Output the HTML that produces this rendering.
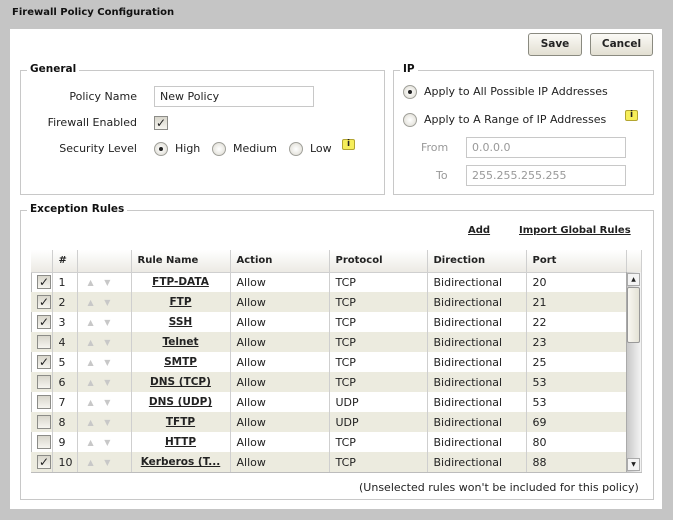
<!DOCTYPE html><html><head><style>
*{margin:0;padding:0;box-sizing:border-box}
body{width:673px;height:520px;background:#c5c5c5;font-family:"DejaVu Sans","Liberation Sans",sans-serif;font-size:11px;color:#222;position:relative;overflow:hidden}
.a{position:absolute}
.r{position:absolute;right:536px;text-align:right}
.title{left:12px;top:7px;font-weight:bold;font-size:10px;color:#111}
.panel{left:10px;top:29px;width:652px;height:480px;background:#fff}
.fs{border:1px solid #c8c8c8}
.lg{background:#fff;font-weight:bold;padding:0 3px;font-size:10.5px;color:#111}
.btn{border:1px solid #8a8a80;border-radius:3px;background:linear-gradient(#fbfaf6,#e2dfd2);font-weight:bold;font-size:10.5px;text-align:center;line-height:21px;height:23px}
.inp{border:1px solid #c8c8c8;height:21px;line-height:19px;padding-left:5px}
.cb{width:14px;height:14px;border:1px solid #8c8c88;background:linear-gradient(#d8d6cc,#f6f5f0);font-size:12px;line-height:12px;text-align:center;font-weight:bold}
.rd{width:14px;height:14px;border:1px solid #a0a09a;border-radius:50%;background:radial-gradient(#fff,#dcdad0)}
.rd.on::after{content:"";position:absolute;left:4px;top:4px;width:4px;height:4px;border-radius:50%;background:#222}
.info{width:13px;height:11px;background:#f6ee5a;border:1px solid #b3a530;font-size:9px;line-height:9px;text-align:center;font-weight:bold;border-radius:2px}
table{border-collapse:collapse;position:absolute;left:31px;top:250px;width:610px;table-layout:fixed}
td,th{border-right:1px solid #cfcfcf;height:20px;padding-left:6px;text-align:left;font-size:11px;white-space:nowrap;overflow:hidden}
th{height:22px;background:linear-gradient(#fff,#eceae4);font-weight:bold;font-size:10px;border-bottom:1px solid #cfcfcf}
tr:nth-child(odd) td{background:#ecebdf}
.rn{text-align:center;font-weight:bold;font-size:10.5px;text-decoration:underline;padding:0}
.ar{color:#c8c8c8;font-size:8px;padding-left:10px;word-spacing:8px}
</style></head><body>
<div class="a title">Firewall Policy Configuration</div>
<div class="a panel"></div>
<div class="a btn" style="left:528px;top:33px;width:54px">Save</div>
<div class="a btn" style="left:590px;top:33px;width:63px">Cancel</div>

<div class="a fs" style="left:20px;top:70px;width:365px;height:125px"></div>
<div class="a lg" style="left:27px;top:63px">General</div>
<div class="r" style="top:90px">Policy Name</div>
<div class="a inp" style="left:154px;top:86px;width:160px">New Policy</div>
<div class="r" style="top:116px">Firewall Enabled</div>
<div class="a cb" style="left:154px;top:116px">✓</div>
<div class="r" style="top:142px">Security Level</div>
<div class="a rd on" style="left:154px;top:142px"></div><div class="a" style="left:175px;top:142px">High</div>
<div class="a rd" style="left:212px;top:142px"></div><div class="a" style="left:233px;top:142px">Medium</div>
<div class="a rd" style="left:289px;top:142px"></div><div class="a" style="left:310px;top:142px">Low</div>
<div class="a info" style="left:342px;top:139px">i</div>

<div class="a fs" style="left:393px;top:70px;width:261px;height:125px"></div>
<div class="a lg" style="left:400px;top:63px">IP</div>
<div class="a rd on" style="left:403px;top:85px"></div><div class="a" style="left:424px;top:85px">Apply to All Possible IP Addresses</div>
<div class="a rd" style="left:403px;top:113px"></div><div class="a" style="left:424px;top:113px">Apply to A Range of IP Addresses</div>
<div class="a info" style="left:625px;top:110px">i</div>
<div class="a" style="left:421px;top:141px;color:#999">From</div>
<div class="a inp" style="left:466px;top:137px;width:160px;color:#999">0.0.0.0</div>
<div class="a" style="left:436px;top:169px;color:#999">To</div>
<div class="a inp" style="left:466px;top:165px;width:160px;color:#999">255.255.255.255</div>

<div class="a fs" style="left:20px;top:210px;width:634px;height:290px"></div>
<div class="a lg" style="left:27px;top:203px">Exception Rules</div>
<div class="a" style="left:468px;top:225px;font-weight:bold;font-size:10px;text-decoration:underline">Add</div>
<div class="a" style="left:519px;top:225px;font-weight:bold;font-size:10px;text-decoration:underline">Import Global Rules</div>
<div class="a" style="left:31px;top:250px;width:611px;height:223px;border:1px solid #bcbcbc"></div>
<table>
<colgroup><col style="width:21px"><col style="width:25px"><col style="width:54px"><col style="width:99px"><col style="width:99px"><col style="width:98px"><col style="width:99px"><col style="width:100px"><col style="width:15px"></colgroup>
<tr style="background:none"><th></th><th>#</th><th></th><th>Rule Name</th><th>Action</th><th>Protocol</th><th>Direction</th><th>Port</th><th></th></tr>
<tr><td><div class="cb">✓</div></td><td>1</td><td class="ar">▲ ▼</td><td class="rn">FTP-DATA</td><td>Allow</td><td>TCP</td><td>Bidirectional</td><td>20</td><td></td></tr>
<tr><td><div class="cb">✓</div></td><td>2</td><td class="ar">▲ ▼</td><td class="rn">FTP</td><td>Allow</td><td>TCP</td><td>Bidirectional</td><td>21</td><td></td></tr>
<tr><td><div class="cb">✓</div></td><td>3</td><td class="ar">▲ ▼</td><td class="rn">SSH</td><td>Allow</td><td>TCP</td><td>Bidirectional</td><td>22</td><td></td></tr>
<tr><td><div class="cb"></div></td><td>4</td><td class="ar">▲ ▼</td><td class="rn">Telnet</td><td>Allow</td><td>TCP</td><td>Bidirectional</td><td>23</td><td></td></tr>
<tr><td><div class="cb">✓</div></td><td>5</td><td class="ar">▲ ▼</td><td class="rn">SMTP</td><td>Allow</td><td>TCP</td><td>Bidirectional</td><td>25</td><td></td></tr>
<tr><td><div class="cb"></div></td><td>6</td><td class="ar">▲ ▼</td><td class="rn">DNS (TCP)</td><td>Allow</td><td>TCP</td><td>Bidirectional</td><td>53</td><td></td></tr>
<tr><td><div class="cb"></div></td><td>7</td><td class="ar">▲ ▼</td><td class="rn">DNS (UDP)</td><td>Allow</td><td>UDP</td><td>Bidirectional</td><td>53</td><td></td></tr>
<tr><td><div class="cb"></div></td><td>8</td><td class="ar">▲ ▼</td><td class="rn">TFTP</td><td>Allow</td><td>UDP</td><td>Bidirectional</td><td>69</td><td></td></tr>
<tr><td><div class="cb"></div></td><td>9</td><td class="ar">▲ ▼</td><td class="rn">HTTP</td><td>Allow</td><td>TCP</td><td>Bidirectional</td><td>80</td><td></td></tr>
<tr><td><div class="cb">✓</div></td><td>10</td><td class="ar">▲ ▼</td><td class="rn">Kerberos (T...</td><td>Allow</td><td>TCP</td><td>Bidirectional</td><td>88</td><td></td></tr>
</table>
<div class="a" style="left:626px;top:272px;width:15px;height:200px;background:linear-gradient(90deg,#c8c8c8,#f4f4f4);border-left:1px solid #aaa"></div>
<div class="a" style="left:627px;top:273px;width:13px;height:13px;background:#f4f4f4;border:1px solid #aaa;font-size:6px;text-align:center;line-height:11px">▲</div>
<div class="a" style="left:627px;top:287px;width:13px;height:56px;background:linear-gradient(90deg,#f8f7f1,#e4e2d6);border:1px solid #999;border-radius:2px"></div>
<div class="a" style="left:627px;top:458px;width:13px;height:13px;background:#f4f4f4;border:1px solid #aaa;font-size:6px;text-align:center;line-height:11px">▼</div>
<div class="a" style="left:359px;top:481px">(Unselected rules won't be included for this policy)</div>
</body></html>
